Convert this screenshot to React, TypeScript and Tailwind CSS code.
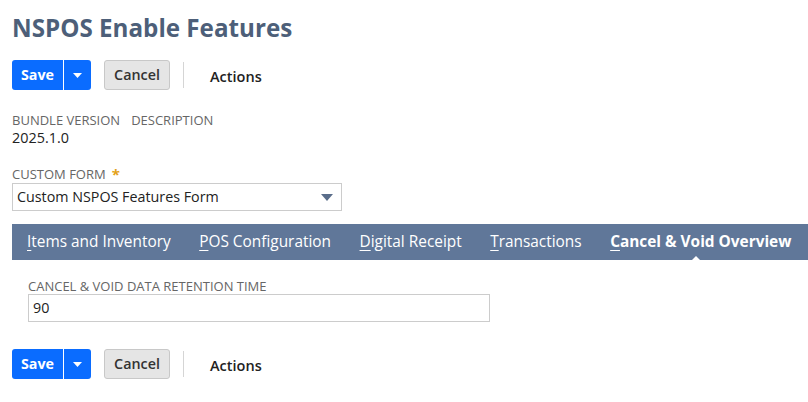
import React from "react";

const font = { fontFamily: '"Open Sans", "Noto Sans", sans-serif' };

function ButtonBar() {
  return (
    <div className="flex items-center h-[30px]">
      <div className="flex h-[30px] rounded-[3px] bg-[#0a6cff] text-white">
        <button className="text-[14.3px] font-bold leading-none w-[51px]">Save</button>
        <div className="w-px bg-white" />
        <button className="w-[27px] flex items-center justify-center">
          <svg width="9" height="5" viewBox="0 0 9 5">
            <path d="M0 0h9L4.5 5z" fill="#fff" />
          </svg>
        </button>
      </div>
      <button className="ml-[13px] h-[30px] w-[66px] rounded-[3px] border border-[#c8c8c8] bg-[#e5e5e5] text-[14.3px] font-semibold text-[#333]">
        Cancel
      </button>
      <div className="ml-[13px] w-px h-[26px] bg-[#d5d5d5]" />
      <span className="ml-[26px] pt-[4px] text-[14.5px] font-semibold text-[#222]">Actions</span>
    </div>
  );
}

const tabs = ["Items and Inventory", "POS Configuration", "Digital Receipt", "Transactions"];

export default function App() {
  return (
    <div className="w-[808px] h-[402px] bg-white overflow-hidden pl-[12px]" style={font}>
      <h1 className="pt-[12px] text-[24.2px] font-bold text-[#4d5f79] leading-[32px]">NSPOS Enable Features</h1>
      <div className="mt-[16px]">
        <ButtonBar />
      </div>

      <div className="mt-[22px] flex gap-[11px] text-[13px] text-[#666] leading-[16px]">
        <span>BUNDLE VERSION</span>
        <span>DESCRIPTION</span>
      </div>
      <div className="text-[14.4px] text-[#222] leading-[20px]">2025.1.0</div>

      <div className="mt-[18px] flex items-center gap-[6px] text-[13px] text-[#666] leading-[16px]">
        <span>CUSTOM FORM</span>
        <span className="text-[#e3a21a] text-[15px] font-bold leading-none">*</span>
      </div>
      <div className="mt-[1px] w-[330px] h-[28px] border border-[#cccccc] flex items-center justify-between pl-[4px] pr-[8px]">
        <span className="text-[14.3px] text-[#222]">Custom NSPOS Features Form</span>
        <svg width="12" height="7" viewBox="0 0 12 7">
          <path d="M0 0h12L6 7z" fill="#5a6d8a" />
        </svg>
      </div>

      <div className="mt-[13px] h-[36px] bg-[#607799] flex items-center pl-[15px] gap-[28.5px] text-[15.4px] text-white">
        {tabs.map((t) => (
          <span key={t}>
            <span className="underline underline-offset-[3px]">{t[0]}</span>
            {t.slice(1)}
          </span>
        ))}
        <span className="relative font-bold">
          <span className="underline underline-offset-[3px]">C</span>ancel &amp; Void Overview
          <span className="absolute left-[79px] top-[26px] w-0 h-0 border-l-[7px] border-r-[7px] border-b-[7px] border-l-transparent border-r-transparent border-b-white" />
        </span>
      </div>

      <div className="pl-[16px] mt-[18px]">
        <div className="text-[13px] text-[#666] leading-[16px]">CANCEL &amp; VOID DATA RETENTION TIME</div>
        <div className="w-[462px] h-[28px] border border-[#cccccc] flex items-center pl-[4px] text-[14.3px] text-[#222]">90</div>
      </div>

      <div className="mt-[27px]">
        <ButtonBar />
      </div>
    </div>
  );
}
